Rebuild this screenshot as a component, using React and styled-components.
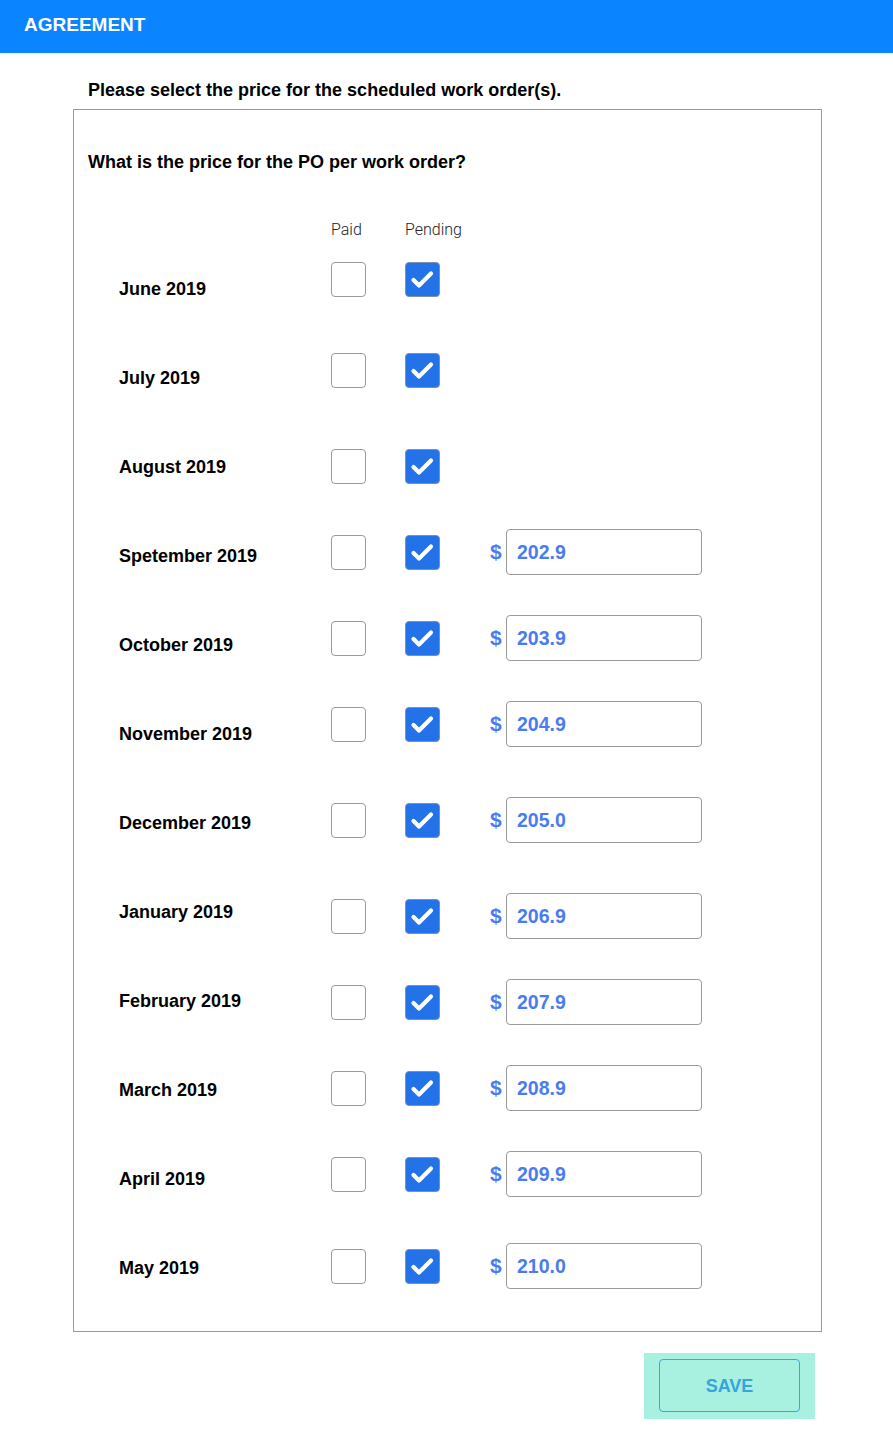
import React from "react";
import styled, { createGlobalStyle } from "styled-components";

const Global = createGlobalStyle`
  html, body { margin: 0; padding: 0; background: #ffffff; }
  body { font-family: "Liberation Sans", Arial, sans-serif; color: #000; }
`;

const Page = styled.div`
  width: 893px;
  min-height: 1442px;
  background: #fff;
`;

const TopBar = styled.header`
  height: 53px;
  background: #0a84ff;
  display: flex;
  align-items: center;
  padding-left: 24px;
  padding-bottom: 4px;
  box-sizing: border-box;
`;

const Title = styled.h1`
  margin: 0;
  color: #fff;
  font-size: 19px;
  font-weight: 700;
  line-height: 22px;
`;

const Main = styled.main`
  width: 749px;
  margin-left: 73px;
`;

const Intro = styled.p`
  margin: 0;
  padding: 26px 0 0 15px;
  height: 56px;
  box-sizing: border-box;
  font-size: 18px;
  font-weight: 700;
  line-height: 22px;
`;

const Card = styled.section`
  border: 1px solid #9a9a9a;
  padding: 0 0 40px 14px;
`;

const Question = styled.h2`
  margin: 41px 0 0 0;
  font-size: 18px;
  font-weight: 700;
  line-height: 22px;
`;

const Heads = styled.div`
  display: flex;
  margin: 47px 0 0 243px;
`;

const Head = styled.span`
  width: ${(p) => p.$w}px;
  font-family: Roboto, "Liberation Sans", sans-serif;
  font-weight: 300;
  font-size: 16px;
  line-height: 20px;
  color: #222;
`;

const Body = styled.div`
  display: flex;
  margin-top: 16px;
  padding-left: 31px;
`;

const LabelColumn = styled.div`
  width: 212px;
  padding-top: 10px;
  display: flex;
  flex-direction: column;
  gap: 43px;
`;

const MonthLabel = styled.div`
  height: 46px;
  display: flex;
  align-items: center;
  font-size: 18px;
  font-weight: 700;
`;

const ControlColumn = styled.div`
  display: flex;
  flex-direction: column;
`;

const ControlRow = styled.div`
  height: 46px;
  margin-top: ${(p) => p.$gap}px;
  display: flex;
  align-items: center;
`;

const Box = styled.span`
  width: 35px;
  height: 35px;
  box-sizing: border-box;
  border-radius: 4px;
  border: 1px solid ${(p) => (p.$checked ? "#7f8fb0" : "#9a9a9a")};
  background: ${(p) => (p.$checked ? "#2372e8" : "#fff")};
  display: flex;
  align-items: center;
  justify-content: center;
  margin-right: ${(p) => p.$mr}px;
`;

const Dollar = styled.span`
  color: #4a7cf0;
  font-size: 21px;
  font-weight: 700;
  width: 16px;
  line-height: 24px;
`;

const PriceField = styled.div`
  width: 196px;
  height: 46px;
  box-sizing: border-box;
  border: 1px solid #9a9a9a;
  border-radius: 4px;
  display: flex;
  align-items: center;
  padding-left: 10px;
  color: #4a7cf0;
  font-size: 19.5px;
  font-weight: 700;
`;

const Footer = styled.div`
  display: flex;
  justify-content: flex-end;
  margin: 21px 7px 0 0;
`;

const SaveWrap = styled.div`
  background: #a8f0df;
  width: 171px;
  height: 66px;
  box-sizing: border-box;
  padding: 6px 15px 7px 15px;
`;

const SaveButton = styled.button`
  width: 100%;
  height: 100%;
  background: transparent;
  border: 1px solid #3aa8da;
  border-radius: 4px;
  color: #36a6da;
  font-family: "Liberation Sans", Arial, sans-serif;
  font-size: 18px;
  font-weight: 700;
  padding-top: 3px;
  cursor: pointer;
`;

const Check = () => (
  <svg width="33" height="33" viewBox="0 0 33 33">
    <path d="M7.5 17 L13 22.5 L25 10.5" fill="none" stroke="#fff" strokeWidth="4.2" strokeLinecap="round" strokeLinejoin="round" />
  </svg>
);

const months = [
  "June 2019",
  "July 2019",
  "August 2019",
  "Spetember 2019",
  "October 2019",
  "November 2019",
  "December 2019",
  "January 2019",
  "February 2019",
  "March 2019",
  "April 2019",
  "May 2019",
];

const rows = [
  { gap: 0, price: null },
  { gap: 45, price: null },
  { gap: 50, price: null },
  { gap: 40, price: "202.9" },
  { gap: 40, price: "203.9" },
  { gap: 40, price: "204.9" },
  { gap: 50, price: "205.0" },
  { gap: 50, price: "206.9" },
  { gap: 40, price: "207.9" },
  { gap: 40, price: "208.9" },
  { gap: 40, price: "209.9" },
  { gap: 46, price: "210.0" },
];

export default function App() {
  return (
    <Page>
      <Global />
      <TopBar>
        <Title>AGREEMENT</Title>
      </TopBar>
      <Main>
        <Intro>Please select the price for the scheduled work order(s).</Intro>
        <Card>
          <Question>What is the price for the PO per work order?</Question>
          <Heads>
            <Head $w={74}>Paid</Head>
            <Head $w={80}>Pending</Head>
          </Heads>
          <Body>
            <LabelColumn>
              {months.map((m) => (
                <MonthLabel key={m}>{m}</MonthLabel>
              ))}
            </LabelColumn>
            <ControlColumn>
              {rows.map((r, i) => (
                <ControlRow key={i} $gap={r.gap}>
                  <Box $mr={39} />
                  <Box $checked $mr={50}>
                    <Check />
                  </Box>
                  {r.price && (
                    <>
                      <Dollar>$</Dollar>
                      <PriceField>{r.price}</PriceField>
                    </>
                  )}
                </ControlRow>
              ))}
            </ControlColumn>
          </Body>
        </Card>
        <Footer>
          <SaveWrap>
            <SaveButton>SAVE</SaveButton>
          </SaveWrap>
        </Footer>
      </Main>
    </Page>
  );
}
